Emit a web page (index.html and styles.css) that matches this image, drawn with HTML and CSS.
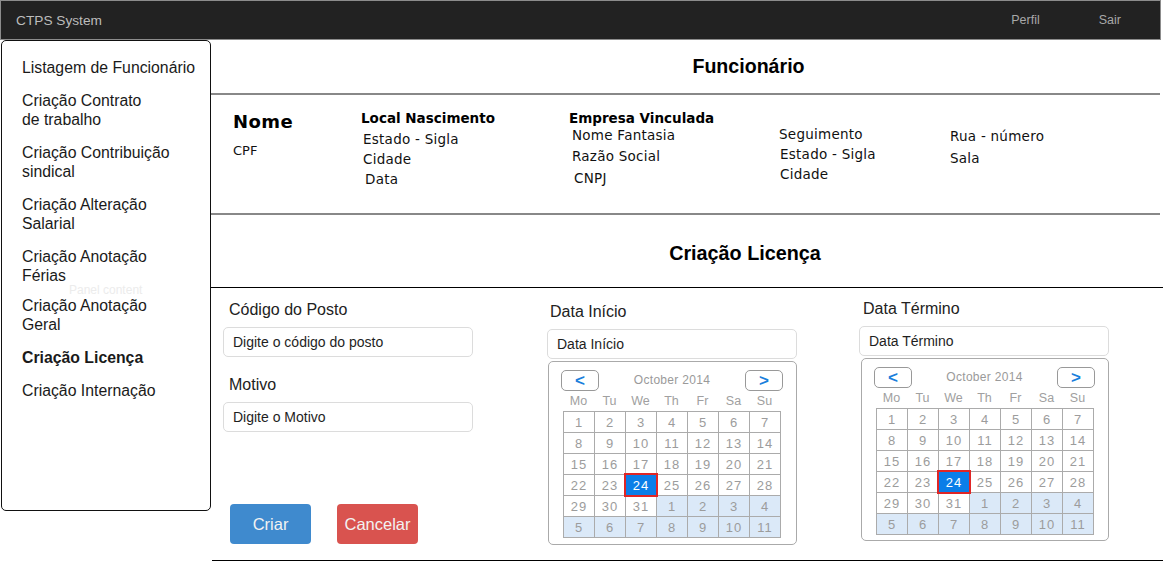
FILE: index.html
```html
<!DOCTYPE html>
<html lang="pt">
<head>
<meta charset="utf-8">
<title>CTPS System</title>
<link rel="stylesheet" href="styles.css">
</head>
<body>
<header class="topbar">
  <span class="brand">CTPS System</span>
  <nav class="top-links"><span>Perfil</span><span>Sair</span></nav>
</header>
<div class="layout">
  <aside class="sidebar">
    <ul class="menu">
      <li>Listagem de Funcionário</li>
      <li>Criação Contrato<br>de trabalho</li>
      <li>Criação Contribuição<br>sindical</li>
      <li>Criação Alteração<br>Salarial</li>
      <li class="tight">Criação Anotação<br>Férias</li>
      <li>Criação Anotação<br>Geral</li>
      <li class="active">Criação Licença</li>
      <li>Criação Internação</li>
    </ul>
    <span class="watermark">Panel content</span>
  </aside>
  <main class="main">
    <div class="page-title">Funcionário</div>
    <section class="info">
      <div class="info-col col-person">
        <div class="person-name">Nome</div>
        <div class="person-cpf">CPF</div>
      </div>
      <div class="info-col col-birth">
        <div class="info-head">Local Nascimento</div>
        <div class="info-item">Estado - Sigla</div>
        <div class="info-item">Cidade</div>
        <div class="info-item shift">Data</div>
      </div>
      <div class="info-col col-company">
        <div class="info-head">Empresa Vinculada</div>
        <div class="info-item">Nome Fantasia</div>
        <div class="info-item">Razão Social</div>
        <div class="info-item shift">CNPJ</div>
      </div>
      <div class="info-col col-segment">
        <div class="info-item">Seguimento</div>
        <div class="info-item shift">Estado - Sigla</div>
        <div class="info-item shift">Cidade</div>
      </div>
      <div class="info-col col-address">
        <div class="info-item">Rua - número</div>
        <div class="info-item">Sala</div>
      </div>
    </section>
    <div class="section-title">Criação Licença</div>
    <section class="form">
      <div class="form-col col-a">
        <label class="field-label">Código do Posto</label>
        <input class="text-input" type="text" value="Digite o código do posto" readonly>
        <label class="field-label second">Motivo</label>
        <input class="text-input" type="text" value="Digite o Motivo" readonly>
        <div class="actions">
          <button class="btn btn-primary">Criar</button>
          <button class="btn btn-danger">Cancelar</button>
        </div>
      </div>
      <div class="form-col col-b">
        <label class="field-label">Data Início</label>
        <input class="text-input" type="text" value="Data Início" readonly>
        <div class="calendar">
          <div class="cal-nav">
            <button class="cal-btn">&lt;</button>
            <span class="cal-title">October 2014</span>
            <button class="cal-btn">&gt;</button>
          </div>
          <div class="cal-week"><span>Mo</span><span>Tu</span><span>We</span><span>Th</span><span>Fr</span><span>Sa</span><span>Su</span></div>
          <div class="cal-grid">
            <span>1</span><span>2</span><span>3</span><span>4</span><span>5</span><span>6</span><span>7</span>
            <span>8</span><span>9</span><span>10</span><span>11</span><span>12</span><span>13</span><span>14</span>
            <span>15</span><span>16</span><span>17</span><span>18</span><span>19</span><span>20</span><span>21</span>
            <span>22</span><span>23</span><span class="sel">24</span><span>25</span><span>26</span><span>27</span><span>28</span>
            <span>29</span><span>30</span><span>31</span><span class="other">1</span><span class="other">2</span><span class="other">3</span><span class="other">4</span>
            <span class="other">5</span><span class="other">6</span><span class="other">7</span><span class="other">8</span><span class="other">9</span><span class="other">10</span><span class="other">11</span>
          </div>
        </div>
      </div>
      <div class="form-col col-c">
        <label class="field-label">Data Término</label>
        <input class="text-input" type="text" value="Data Término" readonly>
        <div class="calendar">
          <div class="cal-nav">
            <button class="cal-btn">&lt;</button>
            <span class="cal-title">October 2014</span>
            <button class="cal-btn">&gt;</button>
          </div>
          <div class="cal-week"><span>Mo</span><span>Tu</span><span>We</span><span>Th</span><span>Fr</span><span>Sa</span><span>Su</span></div>
          <div class="cal-grid">
            <span>1</span><span>2</span><span>3</span><span>4</span><span>5</span><span>6</span><span>7</span>
            <span>8</span><span>9</span><span>10</span><span>11</span><span>12</span><span>13</span><span>14</span>
            <span>15</span><span>16</span><span>17</span><span>18</span><span>19</span><span>20</span><span>21</span>
            <span>22</span><span>23</span><span class="sel">24</span><span>25</span><span>26</span><span>27</span><span>28</span>
            <span>29</span><span>30</span><span>31</span><span class="other">1</span><span class="other">2</span><span class="other">3</span><span class="other">4</span>
            <span class="other">5</span><span class="other">6</span><span class="other">7</span><span class="other">8</span><span class="other">9</span><span class="other">10</span><span class="other">11</span>
          </div>
        </div>
      </div>
    </section>
  </main>
</div>
</body>
</html>
```
FILE: styles.css
```css
* { box-sizing: border-box; }

body {
  margin: 0;
  width: 1163px;
  height: 561px;
  overflow: hidden;
  background: #fff;
  font-family: "Liberation Sans", Arial, sans-serif;
  color: #1a1a1a;
}

/* top bar */
.topbar {
  height: 40px;
  width: 1161px;
  background: #222;
  border: 1px solid #8c8c8c;
  display: flex;
  align-items: center;
  justify-content: space-between;
}
.brand {
  margin-left: 15px;
  color: #bcbcbc;
  font-size: 13.7px;
}
.top-links {
  display: flex;
  gap: 59px;
  padding-right: 39px;
  color: #a8a8a8;
  font-size: 12.5px;
}

/* layout */
.layout {
  display: flex;
  align-items: flex-start;
}

.sidebar {
  position: relative;
  margin-left: 1px;
  width: 210px;
  height: 471px;
  border: 1px solid #111;
  border-radius: 5px;
  flex: none;
}
.menu {
  list-style: none;
  margin: 0;
  padding: 17px 0 0 20px;
  font-size: 15.8px;
  line-height: 19px;
  color: #1a1a1a;
}
.menu li { margin-bottom: 14px; }
.menu li.tight { margin-bottom: 11px; }
.menu li.active { font-weight: bold; }
.menu li:last-child { margin-top: 1px; }
.watermark {
  position: absolute;
  left: 67px;
  top: 242px;
  font-size: 12px;
  color: #ececec;
}

.main {
  flex: 1;
  min-width: 0;
}

.page-title {
  height: 55px;
  margin-right: 3px;
  border-bottom: 2px solid #888;
  display: flex;
  align-items: center;
  justify-content: center;
  padding-left: 126px;
  font-size: 19.6px;
  font-weight: bold;
  color: #000;
}

/* info */
.info {
  height: 120px;
  margin-right: 3px;
  border-bottom: 2px solid #888;
  display: flex;
  padding-left: 22px;
  font-family: "DejaVu Sans", Verdana, sans-serif;
  color: #111;
}
.col-person { width: 128px; padding-top: 16px; }
.col-birth { width: 208px; padding-top: 15px; }
.col-company { width: 210px; padding-top: 15px; }
.col-segment { width: 171px; padding-top: 29px; }
.col-address { padding-top: 30px; }

.person-name {
  font-size: 18px;
  font-weight: bold;
  line-height: 22px;
  letter-spacing: 0.4px;
  color: #000;
}
.person-cpf {
  margin-top: 10px;
  font-size: 13px;
  line-height: 16px;
}
.info-head {
  font-size: 13.5px;
  font-weight: bold;
  line-height: 17px;
  color: #000;
}
.info-item {
  font-size: 13.5px;
  letter-spacing: 0.25px;
  line-height: 20px;
}
.col-birth .info-item { padding-left: 2px; }
.col-birth .info-item:nth-child(2) { margin-top: 2px; }
.col-birth .info-item.shift { padding-left: 4px; }
.col-company .info-item { padding-left: 3px; line-height: 21px; }
.col-company .info-item:nth-child(2) { margin-top: -2px; }
.col-company .info-item.shift { padding-left: 5px; line-height: 23px; }
.col-segment .info-item.shift { padding-left: 1px; }
.col-address .info-item { line-height: 22px; }

.section-title {
  height: 73px;
  border-bottom: 1px solid #000;
  display: flex;
  align-items: center;
  justify-content: center;
  padding-left: 116px;
  padding-top: 4px;
  font-size: 19.8px;
  font-weight: bold;
  color: #000;
}

/* form */
.form {
  height: 273px;
  margin-left: 1px;
  border-bottom: 1px solid #000;
  display: grid;
  grid-template-columns: 324px 312px 250px;
  padding-left: 11px;
}
.form-col {
  display: flex;
  flex-direction: column;
  align-items: flex-start;
}
.col-a { padding-top: 13px; }
.col-b { padding-top: 15px; }
.col-c { padding-top: 12px; }

.field-label {
  font-size: 16px;
  line-height: 18px;
  color: #222;
  margin-bottom: 8px;
}
.col-a .field-label { padding-left: 6px; }
.col-b .field-label { padding-left: 3px; }
.col-c .field-label { padding-left: 4px; }
.field-label.second { margin-top: 19px; }

.text-input {
  width: 250px;
  height: 30px;
  border: 1px solid #dcdcdc;
  border-radius: 5px;
  padding: 0 0 0 9px;
  font-family: "Liberation Sans", Arial, sans-serif;
  font-size: 14px;
  color: #1e1e1e;
  background: #fff;
  outline: none;
}

.actions {
  margin-top: 72px;
  padding-left: 7px;
  display: flex;
  gap: 26px;
}
.btn {
  width: 81px;
  height: 40px;
  border: none;
  border-radius: 4px;
  font-family: "Liberation Sans", Arial, sans-serif;
  font-size: 16.5px;
  color: #f2f2f2;
}
.btn-primary { background: #3f8ace; }
.btn-danger { background: #d9534f; }

/* calendar */
.calendar {
  margin-top: 2px;
  margin-left: 1px;
  width: 249px;
  border: 1px solid #aaa;
  border-radius: 5px;
  padding: 7px 15px 6px 14px;
}
.col-c .calendar { margin-left: 2px; width: 248px; padding-bottom: 5px; }
.cal-nav {
  height: 22px;
  margin: 0 -2px 0 -2px;
  display: flex;
  align-items: center;
  justify-content: space-between;
}
.cal-btn {
  width: 38px;
  height: 21px;
  padding: 0;
  background: #fff;
  border: 1px solid #999;
  border-radius: 5px;
  color: #1a7fdc;
  font-family: "Liberation Sans", Arial, sans-serif;
  font-weight: bold;
  font-size: 17px;
  line-height: 17px;
}
.cal-title {
  color: #9a9a9a;
  font-size: 12px;
  letter-spacing: 0.3px;
}
.cal-week {
  height: 20px;
  display: grid;
  grid-template-columns: repeat(7, 31px);
  align-items: center;
  text-align: center;
  color: #a0a0a0;
  font-size: 12.5px;
}
.cal-grid {
  display: grid;
  grid-template-columns: repeat(7, 30px);
  grid-auto-rows: 20px;
  gap: 1px;
  width: 218px;
  background: #ababab;
  border: 1px solid #ababab;
}
.cal-grid span {
  background: #fff;
  display: flex;
  align-items: center;
  justify-content: center;
  color: #9c9c9c;
  font-size: 13px;
  letter-spacing: 1px;
}
.cal-grid span.other { background: #dbe9f8; }
.cal-grid span.sel {
  position: relative;
  background: #0b7ee8;
  color: #fff;
  outline: 2px solid #e02626;
  outline-offset: 0;
}
```
